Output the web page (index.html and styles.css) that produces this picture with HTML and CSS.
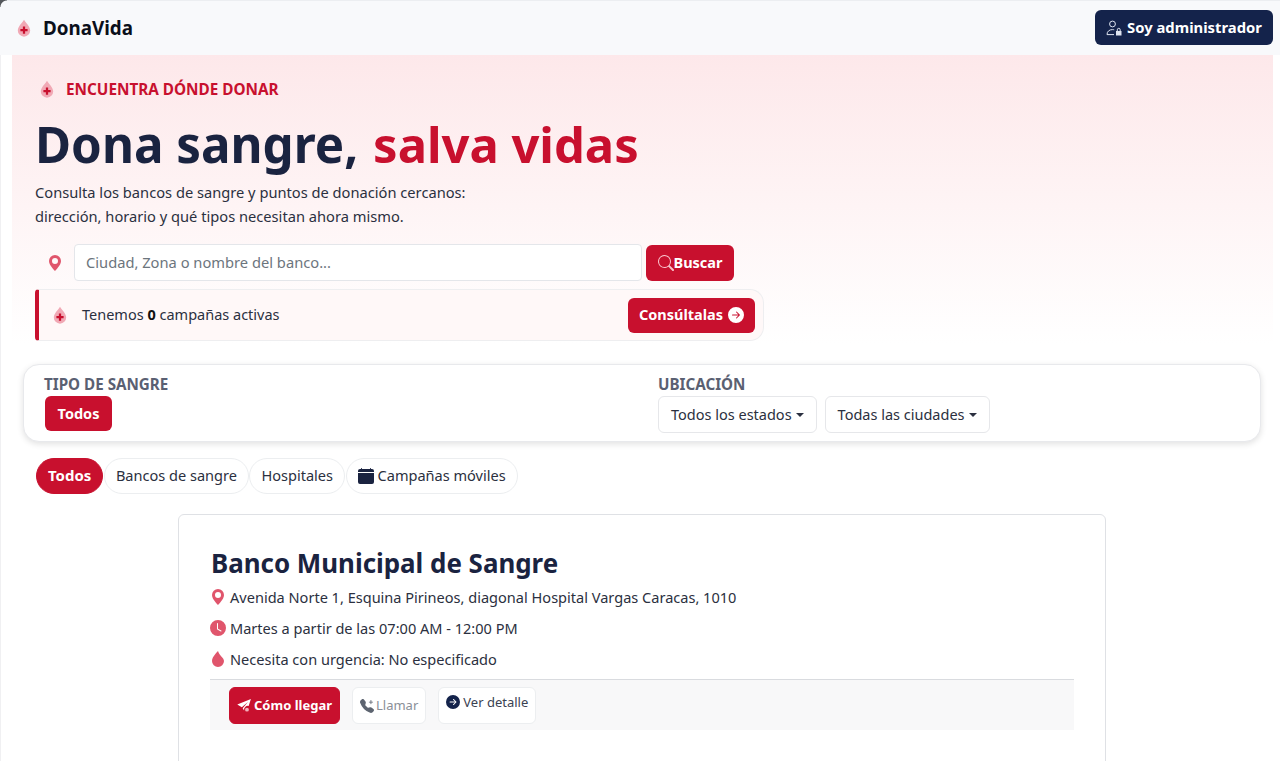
FILE: index.html
```html
<!DOCTYPE html>
<html lang="es">
<head>
  <meta charset="UTF-8" />
  <meta name="viewport" content="width=device-width, initial-scale=1.0"/>
  <title>DonaVida</title>
  <link rel="stylesheet" href="styles.css">
</head>
<body>

<nav class="navbar">
  <a class="brand" href="#">
    <svg class="drop-logo" viewBox="0 0 16 16"><path class="drop-bg" d="M8 .6C6.8 3 2.5 6.4 2.5 10.2a5.5 5.5 0 0 0 11 0C13.5 6.4 9.2 3 8 .6z"/><path class="drop-plus" d="M7 6.6h2v2.2h2.2v2H9V13H7v-2.2H4.8v-2H7z"/></svg>
    <span>DonaVida</span>
  </a>
  <button class="btn btn-admin" type="button">
    <svg class="icon icon-outline" viewBox="0 0 16 16"><circle cx="6.5" cy="4" r="2.9"/><path d="M1 14.6c0-3.4 2.6-5 5.5-5 .7 0 1.2.1 1.7.2M1 14.6h7"/><path class="lock-body" d="M10 11h5.5v4.5H10z"/><path d="M11.3 11V9.8a1.45 1.45 0 0 1 2.9 0V11"/></svg>
    Soy administrador
  </button>
</nav>

<section class="hero">
  <p class="eyebrow">
    <svg class="drop-logo" viewBox="0 0 16 16"><path class="drop-bg" d="M8 .6C6.8 3 2.5 6.4 2.5 10.2a5.5 5.5 0 0 0 11 0C13.5 6.4 9.2 3 8 .6z"/><path class="drop-plus" d="M7 6.6h2v2.2h2.2v2H9V13H7v-2.2H4.8v-2H7z"/></svg>
    ENCUENTRA DÓNDE DONAR
  </p>
  <h1>Dona sangre, <span class="accent">salva vidas</span></h1>
  <p class="lead">Consulta los bancos de sangre y puntos de donación cercanos:<br>dirección, horario y qué tipos necesitan ahora mismo.</p>

  <form class="search">
    <span class="search-pin">
      <svg class="icon" viewBox="0 0 16 16"><path d="M8 16s6-5.686 6-10A6 6 0 0 0 2 6c0 4.314 6 10 6 10zm0-7a3 3 0 1 1 0-6 3 3 0 0 1 0 6z"/></svg>
    </span>
    <input class="search-input" type="text" placeholder="Ciudad, Zona o nombre del banco...">
    <button class="btn btn-red btn-search" type="button">
      <svg class="icon icon-search" viewBox="0 0 16 16"><path d="M11.742 10.344a6.5 6.5 0 1 0-1.397 1.398h-.001c.03.04.062.078.098.115l3.85 3.85a1 1 0 0 0 1.415-1.414l-3.85-3.85a1.007 1.007 0 0 0-.115-.1zM12 6.5a5.5 5.5 0 1 1-11 0 5.5 5.5 0 0 1 11 0z"/></svg>Buscar
    </button>
  </form>

  <div class="campaigns">
    <div class="campaigns-text">
      <svg class="drop-logo" viewBox="0 0 16 16"><path class="drop-bg" d="M8 .6C6.8 3 2.5 6.4 2.5 10.2a5.5 5.5 0 0 0 11 0C13.5 6.4 9.2 3 8 .6z"/><path class="drop-plus" d="M7 6.6h2v2.2h2.2v2H9V13H7v-2.2H4.8v-2H7z"/></svg>
      <span>Tenemos <strong>0</strong> campañas activas</span>
    </div>
    <button class="btn btn-red btn-consult" type="button">
      Consúltalas
      <svg class="icon" viewBox="0 0 16 16"><path d="M8 0a8 8 0 1 1 0 16A8 8 0 0 1 8 0zM4.5 7.5a.5.5 0 0 0 0 1h5.793l-2.147 2.146a.5.5 0 0 0 .708.708l3-3a.5.5 0 0 0 0-.708l-3-3a.5.5 0 1 0-.708.708L10.293 7.5H4.5z"/></svg>
    </button>
  </div>
</section>

<section class="filters">
  <div class="filter-group">
    <h6>TIPO DE SANGRE</h6>
    <div class="filter-row">
      <button class="btn btn-red btn-type" type="button">Todos</button>
    </div>
  </div>
  <div class="filter-group">
    <h6>UBICACIÓN</h6>
    <div class="filter-row">
      <button class="btn btn-select" type="button">Todos los estados<span class="caret"></span></button>
      <button class="btn btn-select" type="button">Todas las ciudades<span class="caret"></span></button>
    </div>
  </div>
</section>

<div class="tabs">
  <button class="tab active" type="button">Todos</button>
  <button class="tab" type="button">Bancos de sangre</button>
  <button class="tab" type="button">Hospitales</button>
  <button class="tab" type="button">
    <svg class="icon" viewBox="0 0 16 16"><path d="M3.5 0a.5.5 0 0 1 .5.5V1h8V.5a.5.5 0 0 1 1 0V1h1a2 2 0 0 1 2 2v11a2 2 0 0 1-2 2H2a2 2 0 0 1-2-2V5h16V4H0V3a2 2 0 0 1 2-2h1V.5a.5.5 0 0 1 .5-.5z"/></svg>
    Campañas móviles
  </button>
</div>

<div class="results">
  <article class="bank-card">
    <h2>Banco Municipal de Sangre</h2>
    <p class="info">
      <svg class="icon" viewBox="0 0 16 16"><path d="M8 16s6-5.686 6-10A6 6 0 0 0 2 6c0 4.314 6 10 6 10zm0-7a3 3 0 1 1 0-6 3 3 0 0 1 0 6z"/></svg>
      Avenida Norte 1, Esquina Pirineos, diagonal Hospital Vargas Caracas, 1010
    </p>
    <p class="info">
      <svg class="icon" viewBox="0 0 16 16"><path d="M16 8A8 8 0 1 1 0 8a8 8 0 0 1 16 0zM8 3.5a.5.5 0 0 0-1 0V9a.5.5 0 0 0 .252.434l3.5 2a.5.5 0 0 0 .496-.868L8 8.71V3.5z"/></svg>
      Martes a partir de las 07:00 AM - 12:00 PM
    </p>
    <p class="info">
      <svg class="icon" viewBox="0 0 16 16"><path d="M8 16a6 6 0 0 0 6-6c0-1.655-1.122-2.904-2.432-4.362C10.254 4.176 8.75 2.503 8 0c0 0-6 5.686-6 10a6 6 0 0 0 6 6z"/></svg>
      Necesita con urgencia: No especificado
    </p>
    <div class="card-actions">
      <button class="btn btn-red btn-action" type="button">
        <svg class="icon" viewBox="0 0 16 16"><path d="M15.9.1.3 6.2l5.2 3.3 7-6-6 7 1.6 2.6a4.5 4.5 0 0 1 5.2-5.2z"/><circle class="send-dot" cx="11.4" cy="12.2" r="2.2"/></svg>
        Cómo llegar
      </button>
      <button class="btn btn-action btn-call" type="button">
        <svg class="icon" viewBox="0 0 16 16"><path d="M1.885.511a1.745 1.745 0 0 1 2.61.163L6.29 2.98c.329.423.445.974.315 1.494l-.547 2.19a.678.678 0 0 0 .178.643l2.457 2.457a.678.678 0 0 0 .644.178l2.189-.547a1.745 1.745 0 0 1 1.494.315l2.306 1.794c.829.645.905 1.87.163 2.611l-1.034 1.034c-.74.74-1.846 1.065-2.877.702a18.634 18.634 0 0 1-7.01-4.42 18.634 18.634 0 0 1-4.42-7.009c-.362-1.03-.037-2.137.703-2.877L1.885.511zM12.5 1a.5.5 0 0 1 .5.5V3h1.5a.5.5 0 0 1 0 1H13v1.5a.5.5 0 0 1-1 0V4h-1.5a.5.5 0 0 1 0-1H12V1.5a.5.5 0 0 1 .5-.5z"/></svg>
        Llamar
      </button>
      <button class="btn btn-action btn-detail" type="button">
        <svg class="icon" viewBox="0 0 16 16"><path d="M8 0a8 8 0 1 1 0 16A8 8 0 0 1 8 0zM4.5 7.5a.5.5 0 0 0 0 1h5.793l-2.147 2.146a.5.5 0 0 0 .708.708l3-3a.5.5 0 0 0 0-.708l-3-3a.5.5 0 1 0-.708.708L10.293 7.5H4.5z"/></svg>
        Ver detalle
      </button>
    </div>
  </article>
</div>

</body>
</html>
```

FILE: styles.css
```css
html, body {
  height: 761px;
  overflow: hidden;
}

body {
  margin: 0;
  font-family: "Noto Sans", "Open Sans", sans-serif;
  font-size: 15px;
  color: #2b3040;
  background: #fff;
  box-shadow: inset 1px 0 0 #f0f0f2;
}

.icon {
  width: 16px;
  height: 16px;
  fill: currentColor;
  flex: none;
}

.icon-outline {
  fill: none;
  stroke: currentColor;
  stroke-width: 1;
}

.icon-outline .lock-body {
  fill: currentColor;
  stroke: none;
}

.drop-logo {
  width: 18px;
  height: 18px;
  flex: none;
}

.drop-bg { fill: #f1a9b5; }
.drop-plus { fill: #c8102e; }

.btn {
  display: inline-flex;
  align-items: center;
  justify-content: center;
  font-family: inherit;
  font-size: 14.5px;
  border: 1px solid transparent;
  border-radius: 6px;
  background: #fff;
  padding: 0 12px 2px;
  cursor: pointer;
}

.btn .icon {
  margin-top: 2px;
}

.btn-red {
  background: #c8102e;
  color: #fff;
  font-weight: 700;
}

/* navbar */
.navbar {
  position: relative;
  display: flex;
  align-items: center;
  justify-content: space-between;
  height: 55px;
  padding: 0 7px 1px 15px;
  background: #f8f9fb;
  border-top: 1px solid #eceef1;
  box-sizing: border-box;
}

/* esquina de la ventana */
.navbar::before {
  content: "";
  position: absolute;
  top: -1px;
  left: 0;
  width: 7px;
  height: 7px;
  background: radial-gradient(circle at 100% 100%, transparent 6px, #55585c 7px);
}

.brand {
  display: flex;
  align-items: center;
  gap: 10px;
  color: #0b0f1a;
  font-size: 18.8px;
  font-weight: 700;
  text-decoration: none;
}

.btn-admin {
  gap: 5px;
  width: 178px;
  height: 35px;
  padding: 0 0 2px;
  background: #14234b;
  color: #fff;
  font-size: 14.8px;
  font-weight: 700;
}

.btn-admin .icon {
  color: #dfe4f0;
}

/* hero */
.hero {
  margin: 0 7px 0 12px;
  height: 289px;
  padding: 24px 0 0 23px;
  box-sizing: border-box;
  background: linear-gradient(180deg, #fde8ea 0%, #fff 100%);
}

.eyebrow {
  display: flex;
  align-items: center;
  gap: 10px;
  margin: 0;
  height: 20px;
  color: #c8102e;
  font-size: 15.3px;
  font-weight: 700;
}

.eyebrow .drop-logo {
  margin-left: 3px;
}

.hero h1 {
  margin: 13px 0 0;
  font-size: 49.3px;
  line-height: 64px;
  font-weight: 700;
  color: #1a2340;
}

.accent {
  margin-left: 2px;
  font-size: 48.9px;
  color: #c8102e;
}

.lead {
  margin: 4px 0 0;
  font-size: 14.67px;
  line-height: 24px;
}

.search {
  display: flex;
  align-items: center;
  width: 699px;
  margin-top: 16px;
}

.search-pin {
  display: flex;
  justify-content: center;
  width: 39px;
  color: #e0556c;
}

.search-input {
  width: 568px;
  height: 37px;
  padding: 0 11px 2px;
  box-sizing: border-box;
  border: 1px solid #e4e6ea;
  border-radius: 4px;
  font-family: inherit;
  font-size: 14.7px;
  background: #fff;
}

.search-input::placeholder {
  color: #6c757d;
}

.btn-search {
  width: 88px;
  height: 36px;
  margin-left: 4px;
  padding: 0 0 2px;
}

.icon-search {
  color: #f9c2cb;
}

.campaigns {
  display: flex;
  align-items: center;
  justify-content: space-between;
  width: 729px;
  height: 52px;
  margin-top: 8px;
  padding: 0 8px 0 12px;
  box-sizing: border-box;
  background: #fff8f8;
  border: 1px solid #eeeef0;
  border-left: 4px solid #c8102e;
  border-radius: 4px 14px 14px 4px;
}

.campaigns-text {
  display: flex;
  align-items: center;
  gap: 13px;
  font-size: 14.5px;
}

.campaigns-text span {
  margin-bottom: 2px;
}

.campaigns-text strong {
  color: #111;
}

.btn-consult {
  gap: 5px;
  width: 127px;
  height: 35px;
  padding: 0 0 2px;
}

/* filtros */
.filters {
  display: grid;
  grid-template-columns: 1fr 1fr;
  column-gap: 32px;
  margin: 20px 19px 0 23px;
  height: 78px;
  padding: 10px 20px 0;
  box-sizing: border-box;
  border: 1px solid #e8e9ec;
  border-radius: 16px;
  box-shadow: 0 2px 6px rgba(0, 0, 0, 0.12);
  background: #fff;
}

.filters h6 {
  margin: 0;
  font-size: 15.2px;
  line-height: 18px;
  font-weight: 700;
  color: #5a6072;
}

.filter-row {
  display: flex;
  gap: 8px;
  margin-top: 3px;
}

.btn-type {
  width: 67px;
  height: 35px;
  margin-left: 1px;
  padding: 0 0 2px;
}

.btn-select {
  height: 37px;
  padding: 0 12px 2px;
  border: 1px solid #e6e7ea;
  color: #2b3040;
}

.caret {
  margin-left: 4px;
  margin-top: 2px;
  border-top: 4px solid currentColor;
  border-left: 4px solid transparent;
  border-right: 4px solid transparent;
}

/* tabs */
.tabs {
  display: flex;
  gap: 0.5px;
  margin: 16px 0 0 36px;
}

.tab {
  display: inline-flex;
  align-items: center;
  gap: 4px;
  height: 36px;
  padding: 0 11px 2px;
  font-family: inherit;
  font-size: 14.55px;
  color: #2b3040;
  background: #fff;
  border: 1px solid #eceef0;
  border-radius: 18px;
}

.tab .icon {
  margin-top: 2px;
  color: #1a2340;
}

.tab.active {
  background: #c8102e;
  border-color: #c8102e;
  color: #fff;
  font-size: 15px;
  font-weight: 700;
}

/* tarjeta */
.results {
  padding-left: 4px;
}

.bank-card {
  width: 928px;
  height: 300px;
  margin: 20px auto 0;
  padding: 32px 31px 0;
  box-sizing: border-box;
  border: 1px solid #dfe1e5;
  border-radius: 6px;
  background: #fff;
}

.bank-card h2 {
  margin: 0 0 2px 1px;
  font-size: 25.9px;
  line-height: 32px;
  font-weight: 700;
  color: #1a2340;
}

.info {
  display: flex;
  align-items: center;
  gap: 4px;
  margin: 0;
  height: 31px;
  font-size: 14.56px;
}

.info .icon {
  color: #e0556c;
}

.card-actions {
  display: flex;
  gap: 12px;
  height: 51px;
  margin-top: 5px;
  padding: 7px 0 0 19px;
  box-sizing: border-box;
  background: #f8f8f9;
  border-top: 1px solid #d9dbdf;
}

.btn-action {
  gap: 3px;
  height: 37px;
  padding: 0 7px 2px;
  font-size: 13px;
  border: 1px solid #eceef0;
}

.btn-action.btn-red {
  border-color: #c8102e;
}

.btn-action .icon {
  width: 14px;
  height: 14px;
}

.send-dot {
  fill: #f3b0bb;
}

.btn-call {
  gap: 2px;
  padding: 0 7px 2px;
  color: #8a8f98;
}

.btn-call .icon {
  color: #5d6470;
}

.btn-detail {
  align-items: flex-start;
  padding-top: 5px;
  color: #3b4252;
}

.btn-detail .icon {
  color: #14234b;
  margin-top: 2px;
}
```
